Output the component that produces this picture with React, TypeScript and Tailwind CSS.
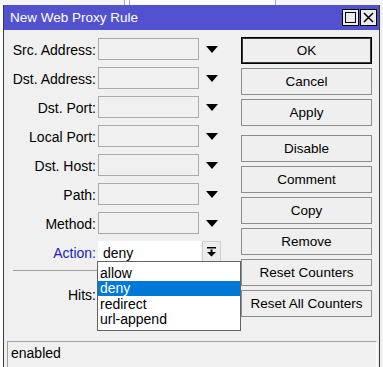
import React from "react";

const font = { fontFamily: '"Liberation Sans", Arial, sans-serif' };

function Arrow() {
  return (
    <svg width="12" height="7" viewBox="0 0 12 7" className="block">
      <polygon points="0,0 12,0 6,7" fill="#000" />
    </svg>
  );
}

function Row({ label, blue, children }: { label: string; blue?: boolean; children?: React.ReactNode }) {
  return (
    <div className="flex items-center h-[22px]">
      <div className={`w-[93px] pr-[1px] pt-[1px] text-right text-[14px] leading-none whitespace-nowrap ${blue ? "text-[#1c1cb4]" : "text-black"}`}>{label}</div>
      <div className="ml-[1px] flex items-center">{children}</div>
    </div>
  );
}

function Field() {
  return (
    <>
      <div className="w-[101px] h-[22px] border border-[#ababab] bg-[#f0f0f0]" />
      <div className="ml-[7px]">
        <Arrow />
      </div>
    </>
  );
}

function Btn({ children, primary }: { children: React.ReactNode; primary?: boolean }) {
  return (
    <div
      className={`h-[27px] w-[131px] flex items-center justify-center pt-[2px] text-[13.5px] text-black bg-[#efefef] whitespace-nowrap ${
        primary ? "border border-black shadow-[inset_0_0_0_1px_#3a3a3a]" : "border border-[#8c8c8c]"
      }`}
    >
      {children}
    </div>
  );
}

export default function App() {
  return (
    <div className="w-[383px] h-[367px] bg-[#f0f0f0] overflow-hidden relative" style={font}>
      {/* top strip (window behind) */}
      <div className="h-[5px] bg-[#f6f6f6] flex">
        <div className="w-[124px]" />
        <div className="w-px bg-[#a8a8a8]" />
        <div className="w-[4px] bg-white" />
        <div className="w-px bg-[#a8a8a8]" />
        <div className="w-[145px] bg-white" />
        <div className="w-px bg-[#a8a8a8]" />
      </div>
      <div className="flex h-[362px]">
        <div className="w-[3px] bg-white" />
        <div className="w-[377px] border-l border-r border-[#3c3c3c] flex flex-col bg-[#f0f0f0]">
          {/* title bar */}
          <div className="h-[25px] bg-[#5252d0] flex items-center pl-[6px] pr-[2px]">
            <div className="text-white text-[13.5px] leading-none flex-1">New Web Proxy Rule</div>
            <div className="flex gap-[1px]">
              <div className="w-[17px] h-[17px] bg-[#ececec] border border-black flex items-center justify-center">
                <div className="w-[11px] h-[11px] border border-black" />
              </div>
              <div className="w-[17px] h-[17px] bg-[#ececec] border border-black flex items-center justify-center">
                <svg width="11" height="11" viewBox="0 0 11 11">
                  <path d="M1 1 L10 10 M10 1 L1 10" stroke="#000" strokeWidth="1.5" />
                </svg>
              </div>
            </div>
          </div>
          {/* content */}
          <div className="h-[311px] flex relative">
            <div className="w-[236px] pt-[8px] flex flex-col">
              <div className="flex flex-col gap-[7px]">
                <Row label="Src. Address:"><Field /></Row>
                <Row label="Dst. Address:"><Field /></Row>
                <Row label="Dst. Port:"><Field /></Row>
                <Row label="Local Port:"><Field /></Row>
                <Row label="Dst. Host:"><Field /></Row>
                <Row label="Path:"><Field /></Row>
                <Row label="Method:"><Field /></Row>
                <Row label="Action:" blue>
                  <div className="w-[103px] h-[22px] bg-white flex items-center pl-[5px] pt-[1px] text-[14px] text-black leading-none">deny</div>
                  <div className="ml-[1px] w-[19px] h-[22px] bg-[#ececec] border border-[#d0d0d0] flex items-center justify-center">
                    <svg width="9" height="10" viewBox="0 0 9 10">
                      <rect x="0" y="0" width="9" height="1.5" fill="#000" />
                      <rect x="3.5" y="2.5" width="2" height="3" fill="#000" />
                      <polygon points="0,5 9,5 4.5,9.5" fill="#000" />
                    </svg>
                  </div>
                </Row>
              </div>
              <div className="ml-[9px] mt-[7px] h-px w-[224px] bg-[#a0a0a0]" />
              <div className="mt-[12px]">
                <Row label="Hits:">
                  <div className="w-[139px] h-[22px] border border-[#ababab] bg-[#f0f0f0]" />
                </Row>
              </div>
            </div>
            <div className="ml-[1px] pt-[7px] flex flex-col">
              <div className="flex flex-col gap-[4px]">
                <Btn primary>OK</Btn>
                <Btn>Cancel</Btn>
                <Btn>Apply</Btn>
              </div>
              <div className="mt-[9px] flex flex-col gap-[4px]">
                <Btn>Disable</Btn>
                <Btn>Comment</Btn>
                <Btn>Copy</Btn>
                <Btn>Remove</Btn>
                <Btn>Reset Counters</Btn>
                <Btn>Reset All Counters</Btn>
              </div>
            </div>
            {/* dropdown list */}
            <div className="absolute left-[93px] top-[231px] w-[144px] h-[70px] bg-white border border-[#646464] flex flex-col py-[3px] text-[14px] leading-none text-black">
              <div className="h-[16px] flex items-center pl-[2px]">allow</div>
              <div className="h-[16px] flex items-center pl-[2px] bg-[#0078d7] text-white">deny</div>
              <div className="h-[16px] flex items-center pl-[2px]">redirect</div>
              <div className="h-[16px] flex items-center pl-[2px]">url-append</div>
            </div>
          </div>
          {/* status bar */}
          <div className="ml-[3px] mr-[2px] flex-1 border-t border-l border-[#a0a0a0] border-r border-r-white flex items-start pt-[4px] pl-[3px] text-[14px] leading-none text-black">
            enabled
          </div>
        </div>
      </div>
    </div>
  );
}
